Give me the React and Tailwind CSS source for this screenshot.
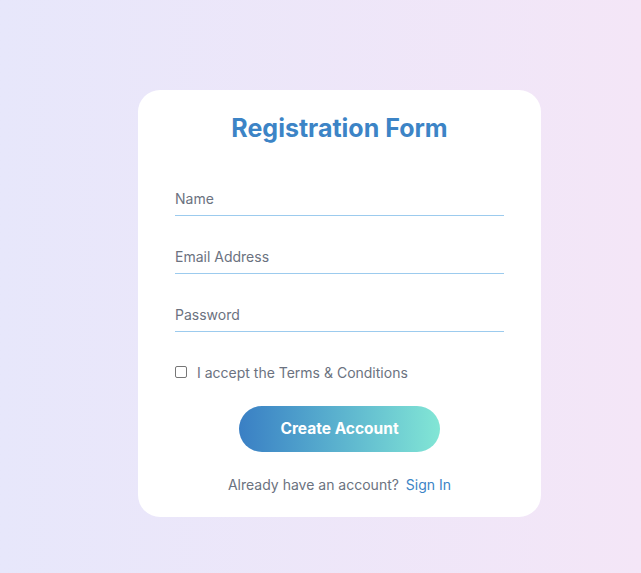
function Field({ type, placeholder }) {
  return (
    <div className="flex flex-col">
      <input
        type={type}
        placeholder={placeholder}
        className="h-[33px] w-full bg-transparent text-[14px] text-[#374151] outline-none placeholder:text-[#6b7280]"
      />
      <div className="h-px w-full bg-[#9ccbee]" />
    </div>
  );
}

export default function App() {
  return (
    <div
      className="min-h-screen w-full bg-gradient-to-r from-[#e7e7fb] to-[#f4e6f7] pt-[90px] pl-[138px]"
      style={{ fontFamily: "Inter, 'Noto Sans', sans-serif" }}
    >
      <div className="w-[403px] rounded-[22px] bg-white px-[37px] pt-[22px] pb-[22px]">
        <h1 className="text-center text-[25px] leading-[32px] font-bold text-[#3c84c6]">
          Registration Form
        </h1>
        <form className="mt-[38px] flex flex-col gap-[24px]" onSubmit={(e) => e.preventDefault()}>
          <Field type="text" placeholder="Name" />
          <Field type="email" placeholder="Email Address" />
          <Field type="password" placeholder="Password" />
        </form>
        <label className="mt-[30px] flex h-[20px] items-center gap-[10px] text-[14px] text-[#6b7280]">
          <span className="h-[12px] w-[12px] rounded-[2px] border border-[#767676] bg-white" />
          I accept the Terms &amp; Conditions
        </label>
        <div className="mt-[24px] flex justify-center">
          <button className="h-[46px] w-[201px] rounded-full bg-gradient-to-r from-[#3a7fc4] to-[#82e6d5] text-[15.5px] font-bold text-white">
            Create Account
          </button>
        </div>
        <p className="mt-[23px] text-center text-[14px] leading-[20px] text-[#6b7280]">
          Already have an account?{" "}
          <a className="ml-[3px] text-[#3c84c6]" href="#">
            Sign In
          </a>
        </p>
      </div>
    </div>
  );
}
